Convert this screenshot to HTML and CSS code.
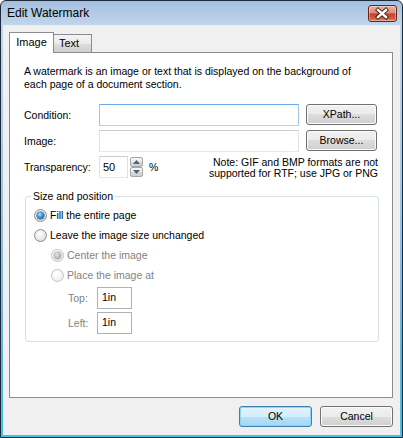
FILE: index.html
```html
<!DOCTYPE html>
<html>
<head>
<meta charset="utf-8">
<link rel="stylesheet" href="styles.css">
</head>
<body>
<div class="window">
  <div class="titlebar">
    <span class="title">Edit Watermark</span>
    <div class="close">
      <svg width="27" height="15" viewBox="0 0 27 15">
        <path d="M9 4 L17 11 M17 4 L9 11" stroke="#3a1a14" stroke-width="4.2" stroke-linecap="square" fill="none"/>
        <path d="M9 4 L17 11 M17 4 L9 11" stroke="#ffffff" stroke-width="2.4" stroke-linecap="square" fill="none"/>
      </svg>
    </div>
  </div>
  <div class="client">
    <div class="tabs">
      <div class="tab active">Image</div>
      <div class="tab">Text</div>
    </div>
    <div class="panel">
      <p class="desc">A watermark is an image or text that is displayed on the background of<br>each page of a document section.</p>
      <div class="form">
        <span class="lbl">Condition:</span>
        <div class="input focus"></div>
        <div class="btn">XPath...</div>
        <span class="lbl">Image:</span>
        <div class="input"></div>
        <div class="btn">Browse...</div>
      </div>
      <div class="trow">
        <span class="tlbl">Transparency:</span>
        <div class="input num">50</div>
        <div class="spinbtns">
          <div class="sb"><svg width="7" height="4" viewBox="0 0 7 4"><path d="M0 4 L3.5 0 L7 4 Z" fill="#4d6185"/></svg></div>
          <div class="sb"><svg width="7" height="4" viewBox="0 0 7 4"><path d="M0 0 L3.5 4 L7 0 Z" fill="#4d6185"/></svg></div>
        </div>
        <span class="pct">%</span>
        <p class="note">Note: GIF and BMP formats are not<br>supported for RTF; use JPG or PNG</p>
      </div>
      <fieldset class="group">
        <legend>Size and position</legend>
        <div class="opt"><span class="radio checked"></span><span>Fill the entire page</span></div>
        <div class="opt"><span class="radio"></span><span>Leave the image size unchanged</span></div>
        <div class="opt sub dis"><span class="radio checked"></span><span>Center the image</span></div>
        <div class="opt sub dis"><span class="radio"></span><span>Place the image at</span></div>
        <div class="posrow first"><span class="plbl">Top:</span><div class="input pos">1in</div></div>
        <div class="posrow"><span class="plbl">Left:</span><div class="input pos">1in</div></div>
      </fieldset>
    </div>
    <div class="footer">
      <div class="btn wide default">OK</div>
      <div class="btn wide">Cancel</div>
    </div>
  </div>
</div>
</body>
</html>
```
FILE: styles.css
```css
* { box-sizing: border-box; }
html, body { margin: 0; padding: 0; }
body {
  font-family: "Liberation Sans", Arial, sans-serif;
  font-size: 10.5px;
  color: #000;
  background: #fff;
}
.window {
  width: 403px;
  height: 438px;
  border: 1px solid #1c2a3a;
  border-radius: 6px 6px 0 0;
  background: linear-gradient(to bottom, #a4bfdd 0px, #c1d6ed 24px, #9fc9ec 40%, #5fb4e4 80%, #3fc2ea 100%);
  display: flex;
  flex-direction: column;
  overflow: hidden;
}
.titlebar {
  height: 24px;
  flex: none;
  display: flex;
  align-items: flex-start;
}
.title {
  font-size: 12px;
  line-height: 15px;
  margin: 5px 0 0 6px;
}
.close {
  margin: 4px 5px 0 auto;
  width: 29px;
  height: 17px;
  border: 1px solid #6a2318;
  border-radius: 3px;
  background: linear-gradient(to bottom, #eab0a2 0%, #dc8c7a 45%, #c6442e 52%, #d0563c 80%, #e0876a 100%);
  box-shadow: inset 0 0 0 1px rgba(255,255,255,0.35);
  display: flex;
}
.client {
  flex: 1;
  margin: 0 2px 2px;
  background: #f0f0f0;
  padding: 7px 7px 0 6px;
  display: flex;
  flex-direction: column;
}
.tabs {
  display: flex;
  align-items: flex-end;
  height: 21px;
  margin-bottom: -1px;
  position: relative;
  z-index: 1;
}
.tab {
  border: 1px solid #898c95;
  border-bottom: none;
  line-height: 13px;
  font-size: 11px;
}
.tab.active {
  width: 45px;
  height: 21px;
  background: #fff;
  text-align: center;
  padding-top: 3px;
  position: relative;
  z-index: 2;
}
.tab:not(.active) {
  width: 39px;
  height: 18px;
  margin-left: -1px;
  margin-bottom: 1px;
  padding: 2px 0 0 5px;
  background: linear-gradient(to bottom, #f3f3f3 0%, #ebebeb 50%, #dddddd 50%, #cfcfcf 100%);
}
.panel {
  flex: none;
  height: 346px;
  border: 1px solid #898c95;
  background: #fff;
  padding: 12px 14px 0 14px;
}
.desc {
  margin: 0;
  line-height: 13px;
}
.form {
  display: grid;
  grid-template-columns: 68px 200px 71px;
  column-gap: 7px;
  row-gap: 4px;
  grid-auto-rows: 22px;
  align-items: center;
  margin-top: 13px;
}
.input {
  height: 22px;
  border: 1px solid;
  border-color: #c9ccd3 #e2e3ea #e3e9ef #dfe3e9;
  background: #fff;
}
.input.focus {
  border-color: #6fa8e0 #9fc6e8 #b2d5ee #9fc6e8;
}
.btn {
  height: 21px;
  border: 1px solid #707070;
  border-radius: 3px;
  background: linear-gradient(to bottom, #f2f2f2 0%, #ebebeb 50%, #dddddd 50%, #cfcfcf 100%);
  box-shadow: inset 0 0 0 1px #fbfbfb;
  text-align: center;
  line-height: 19px;
  align-self: start;
}
.btn.default {
  border-color: #3c7fb1;
  background: linear-gradient(to bottom, #e5f4fc 0%, #d3edfb 50%, #b8e2fa 50%, #a3d7f5 100%);
  box-shadow: inset 0 0 0 1px #8fd5f4;
}
.trow {
  display: flex;
  align-items: flex-start;
  margin-top: 4px;
  height: 22px;
  width: 353px;
}
.tlbl {
  width: 75px;
  line-height: 22px;
}
.input.num {
  width: 29px;
  padding-left: 3px;
  line-height: 20px;
  font-size: 11px;
  border-color: #c9ccd3 #dcdfe5 #e3e9ef #dcdfe5;
}
.spinbtns {
  margin-left: 2px;
  padding-top: 1px;
  display: flex;
  flex-direction: column;
  width: 13px;
}
.sb {
  height: 10px;
  border: 1px solid #a7a7a7;
  border-radius: 2px;
  background: linear-gradient(to bottom, #f7f7f7 0%, #e8e8e8 50%, #dadada 51%, #d0d0d0 100%);
  display: flex;
  align-items: center;
  justify-content: center;
}
.pct {
  margin-left: 6px;
  line-height: 22px;
}
.note {
  margin: 1px -1px 0 auto;
  text-align: right;
  line-height: 11px;
}
.group {
  margin: 12px 0 0 1px;
  width: 354px;
  border: 1px solid #d5dfe5;
  border-radius: 3px;
  padding: 0 5px 7px 5px;
  min-width: 0;
}
.group legend {
  padding: 0 2px;
  line-height: 13px;
}
.opt {
  display: flex;
  align-items: center;
  height: 20px;
}
.opt:first-of-type { margin-top: 2px; }
.radio {
  width: 13px;
  height: 13px;
  flex: none;
  margin: 0 3px 0 3px;
  border-radius: 50%;
  border: 1px solid #8a8c8f;
  background: radial-gradient(circle at 40% 35%, #ffffff 0%, #f0f0f0 40%, #cfd1d3 100%);
  position: relative;
}
.radio.checked::after {
  content: "";
  position: absolute;
  left: 2px;
  top: 2px;
  width: 7px;
  height: 7px;
  border-radius: 50%;
  background: radial-gradient(circle at 40% 35%, #b9ecff 0%, #3a9be0 40%, #0c4a86 100%);
  box-shadow: 0 0 0 0.5px #153e65;
}
.opt.sub { padding-left: 17px; }
.opt.dis { color: #838383; }
.opt.dis .radio {
  border-color: #c3c3c3;
  background: radial-gradient(circle at 40% 35%, #ffffff 0%, #f6f6f6 50%, #e4e4e4 100%);
}
.opt.dis .radio.checked::after {
  background: radial-gradient(circle at 40% 35%, #e6e6e6 0%, #b4b4b4 60%, #9a9a9a 100%);
  box-shadow: 0 0 0 0.5px #9c9c9c;
}
.posrow {
  display: flex;
  align-items: center;
  margin-left: 37px;
  margin-top: 3px;
  color: #838383;
}
.posrow.first { margin-top: 2px; }
.plbl { width: 29px; }
.input.pos {
  width: 35px;
  color: #000;
  padding-left: 4px;
  line-height: 18px;
  border-color: #adb2b5;
}
.footer {
  display: flex;
  justify-content: flex-end;
  gap: 8px;
  margin-top: 8px;
}
.btn.wide { width: 73px; }
```
